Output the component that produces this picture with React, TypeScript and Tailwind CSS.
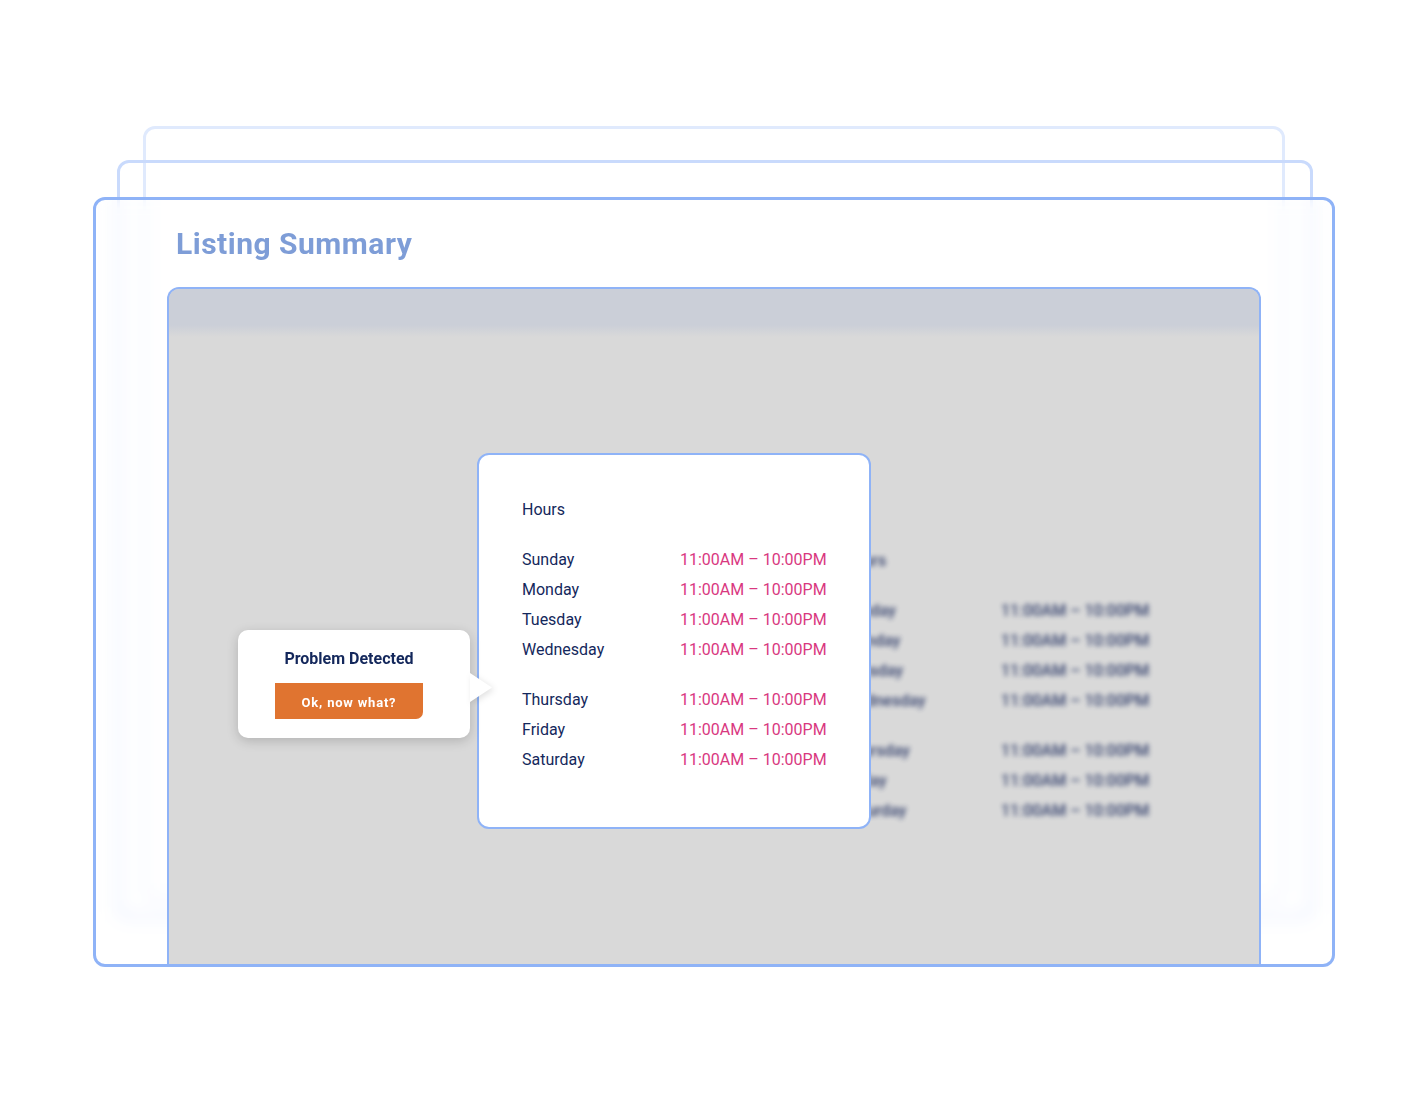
import React from "react";

const DAYS_A = ["Sunday", "Monday", "Tuesday", "Wednesday"];
const DAYS_B = ["Thursday", "Friday", "Saturday"];
const TIME = "11:00AM – 10:00PM";

function HoursList({ blurred }: { blurred?: boolean }) {
  const day = blurred ? "text-[#243262] font-medium" : "text-[#14285c]";
  const time = blurred ? "text-[#243262] font-medium" : "text-[#d9387f]";
  const row = (d: string) => (
    <div key={d} className="flex leading-[30px]">
      <span className={`w-[158px] ${day}`}>{d}</span>
      <span className={time}>{TIME}</span>
    </div>
  );
  return (
    <div className="text-[16px] whitespace-nowrap">
      <div className={`leading-[30px] ${day}`}>Hours</div>
      <div className="mt-[20px]">{DAYS_A.map(row)}</div>
      <div className="mt-[20px]">{DAYS_B.map(row)}</div>
    </div>
  );
}

export default function App() {
  return (
    <div className="w-[1426px] h-[1096px] bg-white pt-[197px] pl-[93px] font-['Roboto','Liberation_Sans',sans-serif]">
      <div className="relative w-[1242px] h-[770px]">
        {/* stacked cards behind */}
        <div className="absolute left-[50px] top-[-71px] w-[1142px] h-[775px] rounded-[12px] border-[3px] border-[#e0eafd]" />
        <div className="absolute left-[24px] top-[-37px] w-[1196px] h-[758px] rounded-[12px] border-[3px] border-[#c9dafc]" />

        {/* ── Front card ───────────────────────────── */}
        <div className="relative z-10 w-full h-full rounded-[12px] border-[3px] border-[#8fb3f7] bg-white/40 backdrop-blur-[8px] flex flex-col overflow-hidden">
          <h1 className="mt-[26px] ml-[80px] text-[30px] leading-[36px] font-bold tracking-[0.5px] text-[#7e9dd7]">
            Listing Summary
          </h1>

          <div className="mt-[25px] mx-[71px] flex-1 flex flex-col border-2 border-b-0 border-[#8fb3f7] rounded-t-[12px] bg-[#d9d9d9] overflow-visible">
            <div className="h-[48px] rounded-t-[10px] bg-[linear-gradient(#cbcfd8_0,#cbcfd8_36px,#d9d9d9_48px)]" />

            <div className="relative flex-1 pl-[308px] pt-[116px]">
              {/* blurred copy of the hours table */}
              <div className="absolute left-[674px] top-[209px] blur-[2.5px] opacity-90">
                <HoursList blurred />
              </div>

              {/* hours card */}
              <div className="relative w-[394px] h-[376px] rounded-[12px] border-2 border-[#8fb3f7] bg-white pl-[43px] pt-[40px]">
                <HoursList />
              </div>

              {/* problem popup */}
              <div className="absolute left-[69px] top-[293px] z-20 w-[232px] h-[108px] rounded-[10px] bg-white shadow-[0_3px_12px_rgba(0,0,0,0.18)] pl-[37px] pt-[19px]">
                <div className="w-[148px] text-center text-[16px] leading-[20px] font-bold text-[#13275b] whitespace-nowrap">
                  Problem Detected
                </div>
                <button className="mt-[14px] w-[148px] h-[36px] pt-[3px] bg-[#e07430] rounded-br-[7px] text-white text-[13px] font-bold tracking-[0.8px]">
                  Ok, now what?
                </button>
                <svg
                  className="absolute left-full top-[43px] drop-shadow-[2px_2px_3px_rgba(0,0,0,0.12)]"
                  width="22"
                  height="29"
                  viewBox="0 0 22 29"
                >
                  <path d="M0 0 L22 14.5 L0 29 Z" fill="#ffffff" />
                </svg>
              </div>
            </div>
          </div>
        </div>
      </div>
    </div>
  );
}
